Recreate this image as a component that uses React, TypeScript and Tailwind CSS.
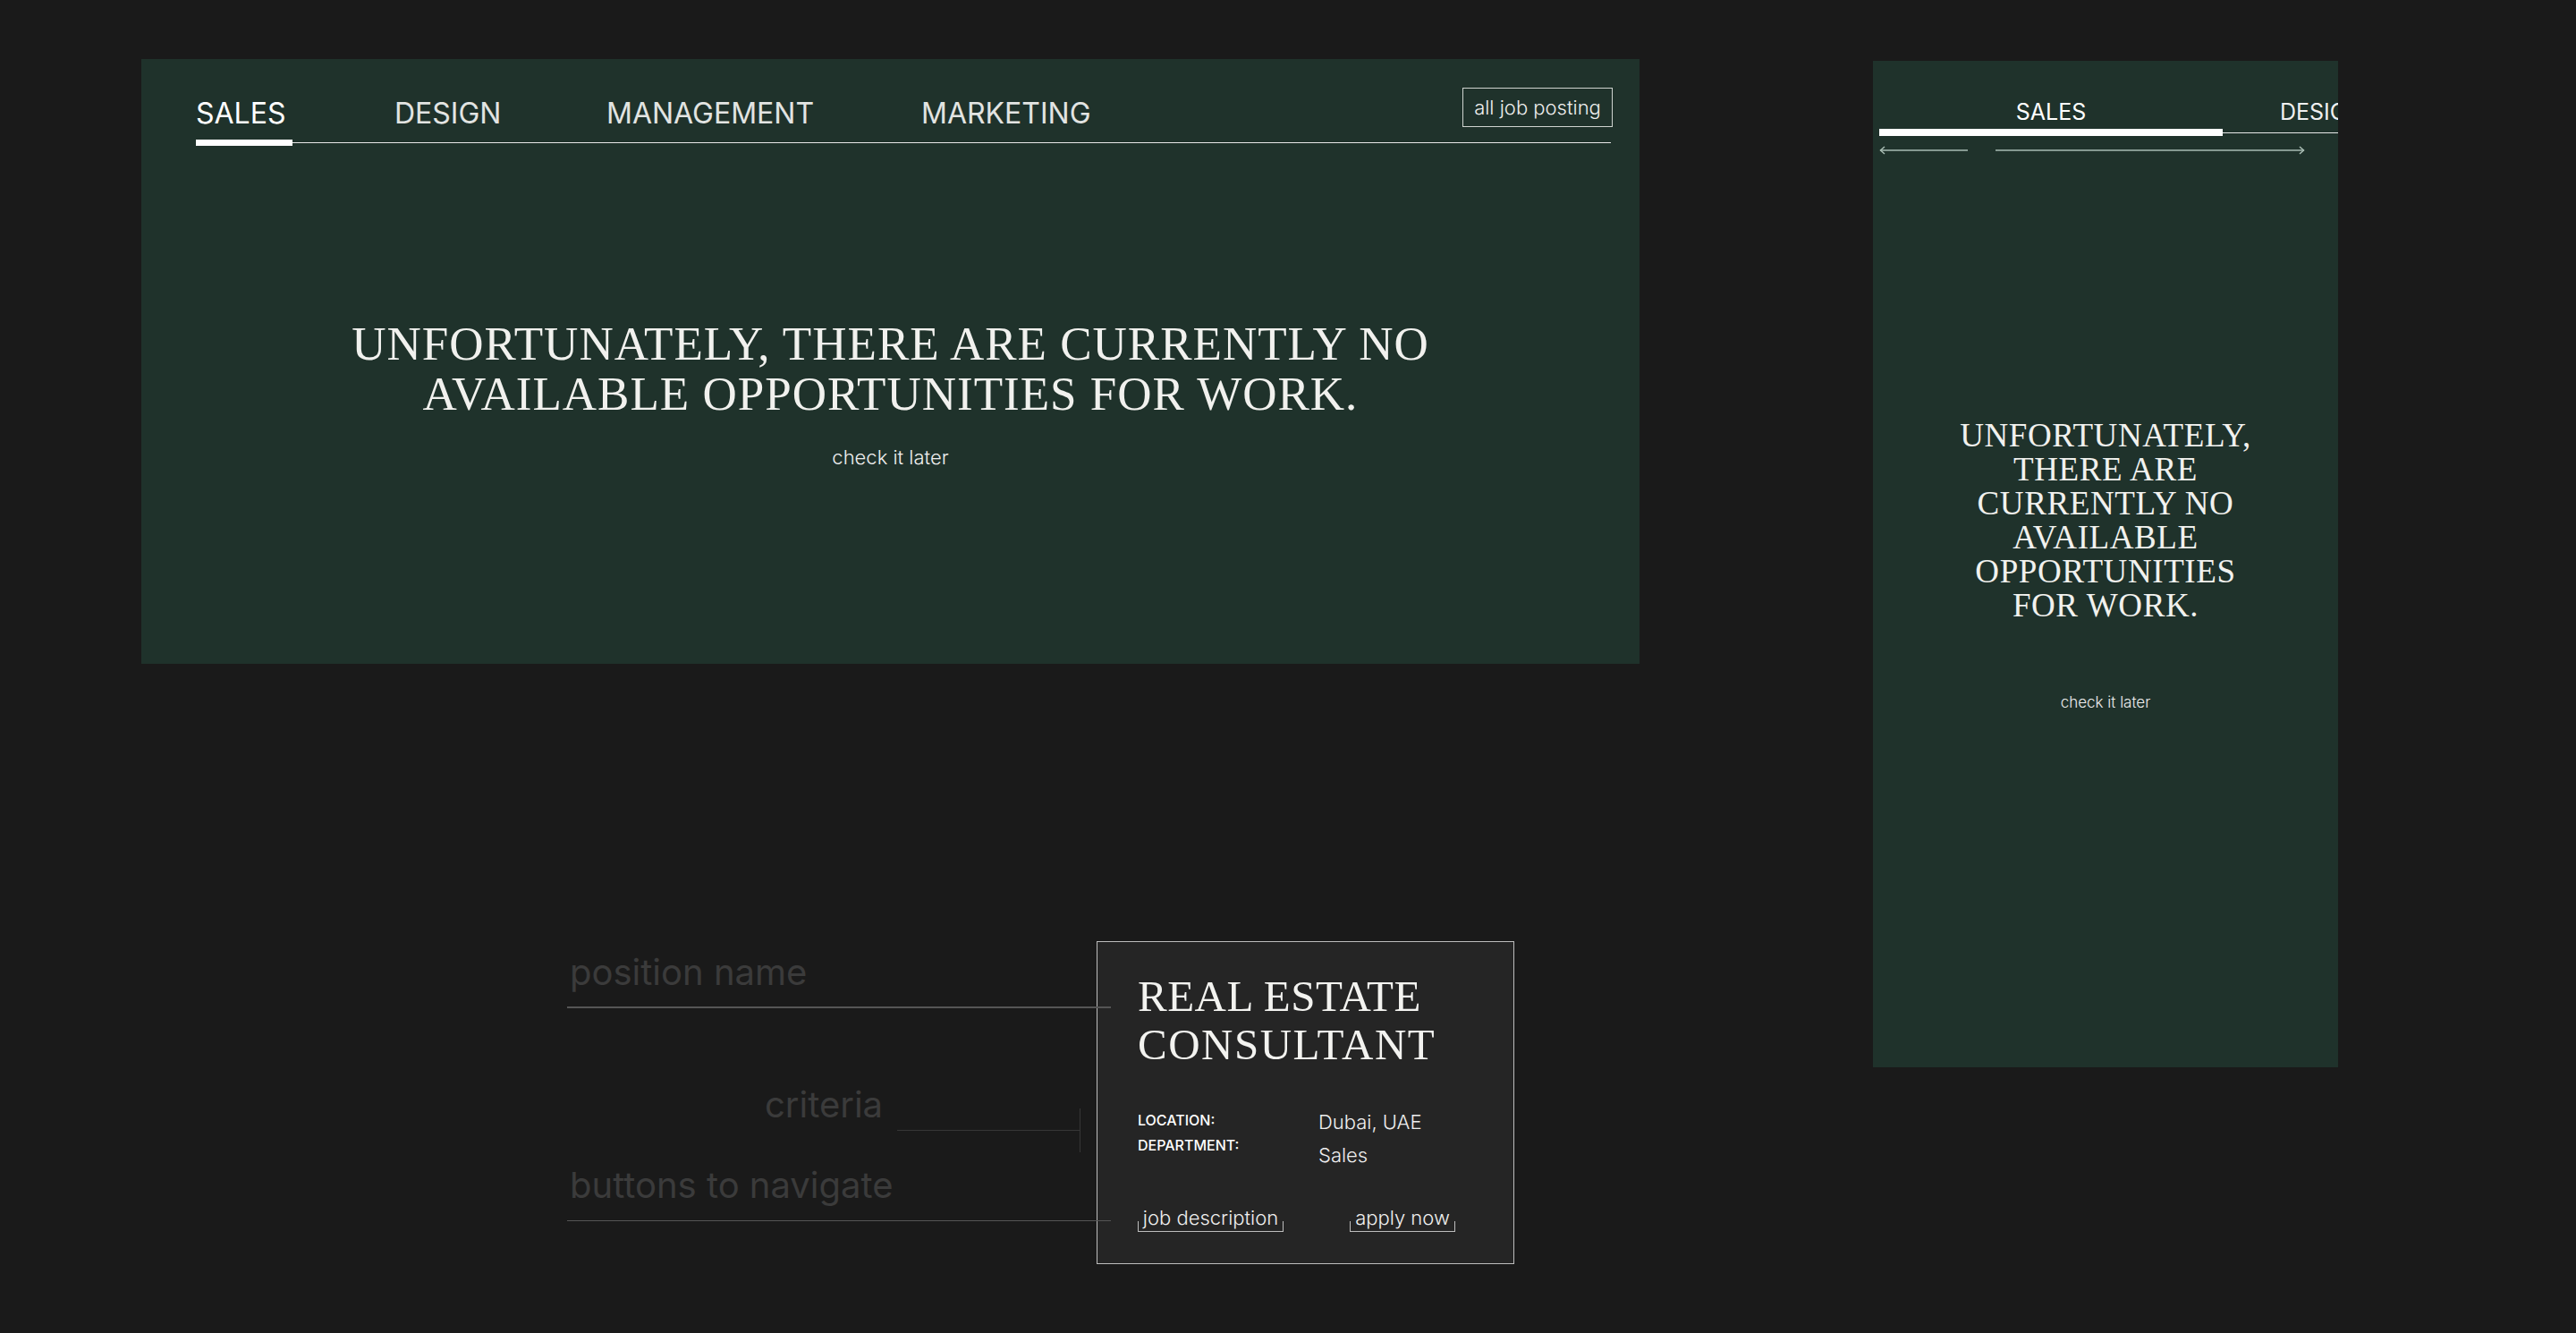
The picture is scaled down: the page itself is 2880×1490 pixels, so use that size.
const tabs = [
  { label: 'SALES', w: 'w-[222px]', active: true },
  { label: 'DESIGN', w: 'w-[237px]', active: false },
  { label: 'MANAGEMENT', w: 'w-[352px]', active: false },
  { label: 'MARKETING', w: 'w-[200px]', active: false },
];

function DesktopPanel() {
  return (
    <div className="w-[1675px] h-[676px] bg-[#1f322b] pt-[32px] px-[61px] flex flex-col">
      {/* Tabs */}
      <div className="flex items-end justify-between w-[1584px]">
        <div className="flex pb-[9px]">
          {tabs.map((t) => (
            <div
              key={t.label}
              className={`${t.w} text-[32px] leading-[40px] ${t.active ? 'text-white' : 'text-[#e2e4e2]'}`}
            >
              {t.label}
            </div>
          ))}
        </div>
        <button className="mb-[14px] h-[44px] w-[168px] border border-[#cfd3d0] text-[22px] leading-[28px] text-[#eeeeee] font-light">
          all job posting
        </button>
      </div>
      <div className="flex items-center h-[7px] w-[1582px]">
        <div className="w-[108px] h-[7px] bg-white"></div>
        <div className="flex-1 h-px bg-[#e8e8e8]"></div>
      </div>

      {/* Empty state */}
      <div className="mt-[193px] flex flex-col items-center">
        <h2 className="font-['Liberation_Serif',serif] text-[53px] leading-[56px] tracking-[1px] text-[#f1f1ee] text-center">
          UNFORTUNATELY, THERE ARE CURRENTLY NO
          <br />
          AVAILABLE OPPORTUNITIES FOR WORK.
        </h2>
        <p className="mt-[29px] text-[22px] leading-[28px] text-[#eeeeee] font-light">check it later</p>
      </div>
    </div>
  );
}

function Arrow({ width, dir }: { width: number; dir: 'left' | 'right' }) {
  const head = dir === 'left' ? 'M6 1 L1.5 5 L6 9' : `M${width - 6} 1 L${width - 1.5} 5 L${width - 6} 9`;
  return (
    <svg width={width} height="10" viewBox={`0 0 ${width} 10`} fill="none">
      <path d={`M1 5 H${width - 1}`} stroke="#a9bdb4" strokeWidth="1.5" />
      <path d={head} stroke="#a9bdb4" strokeWidth="1.5" />
    </svg>
  );
}

function MobilePanel() {
  return (
    <div className="w-[520px] h-[1125px] bg-[#1f322b] overflow-hidden flex flex-col">
      <div className="flex pl-[7px] pt-[42px] whitespace-nowrap">
        <div className="w-[384px] shrink-0 text-center text-[25px] leading-[30px] text-white">SALES</div>
        <div className="ml-[64px] shrink-0 text-[25px] leading-[30px] text-[#f0f0f0]">DESIGN</div>
      </div>
      <div className="mt-[4px] flex items-center h-[8px] pl-[7px]">
        <div className="w-[384px] h-[8px] bg-white shrink-0"></div>
        <div className="flex-1 h-px bg-[#e8e8e8]"></div>
      </div>
      <div className="mt-[11px] flex items-center gap-[29px] pl-[7px] h-[10px]">
        <Arrow width={100} dir="left" />
        <Arrow width={347} dir="right" />
      </div>

      <div className="mt-[295px] flex flex-col items-center">
        <h2 className="font-['Liberation_Serif',serif] text-[37px] leading-[38px] tracking-[0.6px] text-[#f1f1ee] text-center">
          UNFORTUNATELY,
          <br />
          THERE ARE
          <br />
          CURRENTLY NO
          <br />
          AVAILABLE
          <br />
          OPPORTUNITIES
          <br />
          FOR WORK.
        </h2>
        <p className="mt-[78px] text-[17px] leading-[22px] text-[#eeeeee] font-light">check it later</p>
      </div>
    </div>
  );
}

function BracketButton({ label, className }: { label: string; className?: string }) {
  return (
    <button className={`relative pb-[2px] text-center text-[22px] leading-[28px] text-[#efefef] font-light ${className ?? ''}`}>
      {label}
      <span className="absolute left-0 right-0 bottom-0 h-[12px] border-x border-b border-[#bdbdbd]"></span>
    </button>
  );
}

function JobCard() {
  return (
    <div className="w-[467px] h-[361px] bg-[#252525] border border-[#bdbdbd] pt-[34px] pl-[45px]">
      <h3 className="font-['Liberation_Serif',serif] text-[49px] leading-[54px] tracking-[0.5px] text-[#f3f3f0]">
        REAL ESTATE
        <br />
        <span className="tracking-[1.5px]">CONSULTANT</span>
      </h3>
      <div className="mt-[41px] flex">
        <div className="w-[202px] pt-[2px] text-[16px] leading-[28px] font-medium text-white">
          <div>LOCATION:</div>
          <div>DEPARTMENT:</div>
        </div>
        <div className="text-[22px] leading-[37px] text-[#eeeeee] font-light">
          <div>Dubai, UAE</div>
          <div>Sales</div>
        </div>
      </div>
      <div className="mt-[37px] flex items-start">
        <BracketButton label="job description" className="w-[163px]" />
        <BracketButton label="apply now" className="ml-[74px] w-[118px]" />
      </div>
    </div>
  );
}

function Annotations() {
  return (
    <div className="w-[592px] pt-[12px] flex flex-col text-[#3b3b3b] text-[40px] leading-[46px]">
      <div className="pl-[3px]">position name</div>
      <div className="relative z-10 mt-[15px] w-[608px] h-[1.5px] bg-[#555555]"></div>
      <div className="mt-[85px] flex items-start">
        <div className="w-[369px] pl-[221px] shrink-0">criteria</div>
        <div className="mt-[27px] w-[205px] h-[49px] flex items-center">
          <div className="flex-1 h-px bg-[#363636]"></div>
          <div className="w-px h-full bg-[#363636]"></div>
        </div>
      </div>
      <div className="mt-[14px] pl-[3px]">buttons to navigate</div>
      <div className="relative z-10 mt-[16px] w-[608px] h-[1.5px] bg-[#555555]"></div>
    </div>
  );
}

export default function App() {
  return (
    <div className="w-[2880px] h-[1490px] bg-[#1a1a1a] flex overflow-hidden font-['Inter',sans-serif]">
      <div className="pl-[158px] pt-[66px] flex flex-col shrink-0">
        <DesktopPanel />
        <div className="mt-[310px] ml-[476px] flex">
          <Annotations />
          <JobCard />
        </div>
      </div>
      <div className="ml-[261px] mt-[68px] shrink-0">
        <MobilePanel />
      </div>
    </div>
  );
}
